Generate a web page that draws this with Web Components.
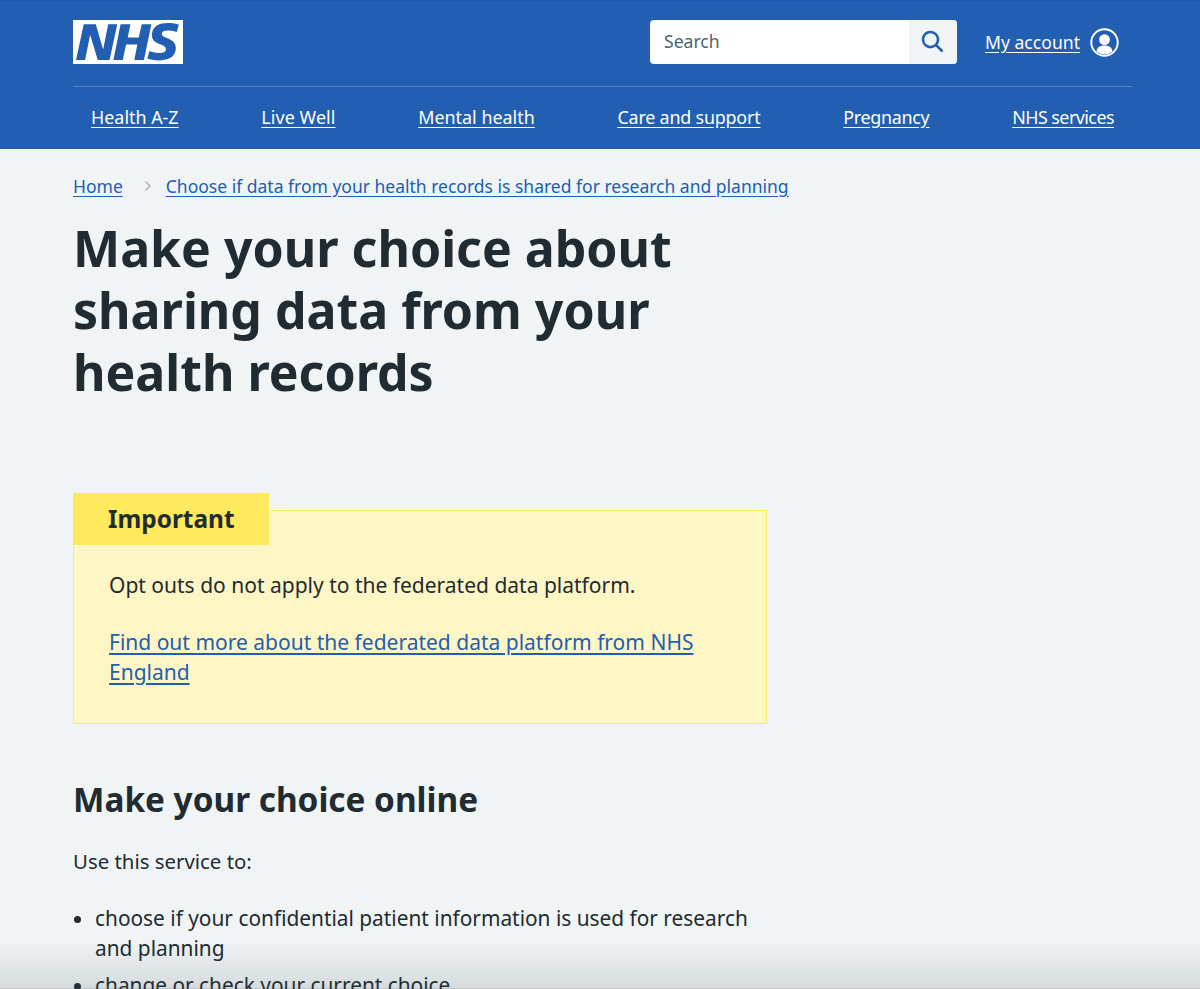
<!DOCTYPE html>
<html lang="en">
<head>
<meta charset="utf-8">
<title>Make your choice about sharing data from your health records</title>
<style>
  html, body { margin: 0; height: 100%; overflow: hidden; }
  body { background: #f0f4f5; color: #212b32; font-family: "Noto Sans", "Open Sans", sans-serif; }
</style>
</head>
<body>
<site-header></site-header>
<main-page>
  <bread-crumbs>
    <a href="#">Home</a>
    <a href="#">Choose if data from your health records is shared for research and planning</a>
  </bread-crumbs>
  <h1 slot="title">Make your choice about sharing data from your health records</h1>
  <important-box label="Important">
    <p>Opt outs do not apply to the federated data platform.</p>
    <p><a href="#">Find out more about the federated data platform from NHS England</a></p>
  </important-box>
  <service-intro></service-intro>
</main-page>
<bottom-fade></bottom-fade>

<script>
class SiteHeader extends HTMLElement {
    constructor() {
        super();
        this.attachShadow({ mode: 'open' });
    }

    connectedCallback() {
        const links = [['Health A-Z', 0], ['Live Well', 0.08], ['Mental health', 0], ['Care and support', -0.2], ['Pregnancy', -0.28], ['NHS services', -0.55]];
        this.shadowRoot.innerHTML = `
            <style>
                :host { display: block; height: 149px; box-sizing: border-box; background: #225eb1; border-top: 1px solid #1f58a6; padding: 0 68px 0 73px; color: #fff; }
                a { color: #fff; text-underline-offset: 3px; }
                .top { display: flex; align-items: center; height: 85px; border-bottom: 1px solid #4f80c4; }
                .logo { display: block; width: 110px; height: 44px; margin-top: -3px; }
                .search { display: flex; width: 307px; height: 44px; margin-left: auto; margin-top: -3px; background: #fff; border-radius: 4px; overflow: hidden; }
                .search span { flex: 1; padding-left: 14px; line-height: 43px; font-size: 17.6px; color: #4c6272; }
                .search div { width: 48px; background: #f0f4f5; display: flex; align-items: center; justify-content: center; }
                .account { display: flex; align-items: center; gap: 10px; margin-left: 28px; margin-right: 13px; font-size: 17.6px; margin-top: -3px; }
                nav { display: flex; justify-content: space-between; padding: 17px 18px 0; font-size: 17.9px; line-height: 26px; }
            </style>
            <div class="top">
                <svg class="logo" viewBox="0 0 40 16" aria-label="NHS">
                    <path fill="#fff" d="M0 0h40v16H0z"/>
                    <path fill="#225eb1" d="M3.9 1.5h4.4l2.6 9h.1l1.8-9h3.3l-2.8 13H9l-2.7-9h-.1l-1.8 9H1.1M17.3 1.5h3.6l-1 4.9h4L25 1.5h3.5l-2.7 13h-3.5l1.1-5.6h-4.1l-1.2 5.6h-3.4M37.7 4.4c-.7-.3-1.6-.6-2.9-.6-1.4 0-2.5.2-2.5 1.3 0 1.8 5.1 1.2 5.1 5.1 0 3.6-3.3 4.500-6.4 4.500-1.300 0-2.900-.3-4-.7l.8-2.700c.7.4 2.100.7 3.200.7s2.800-.2 2.800-1.500c0-2.100-5.100-1.300-5.100-5 0-3.400 2.900-4.400 5.800-4.400 1.600 0 3.100.2 4 .6"/>
                </svg>
                <div class="search">
                    <span>Search</span>
                    <div>
                        <svg width="30" height="30" viewBox="0 0 24 24"><path fill="#225eb1" d="M19.71 18.29l-4.11-4.1a7 7 0 1 0-1.41 1.41l4.1 4.11a1 1 0 0 0 1.42 0 1 1 0 0 0 0-1.42zM5 10a5 5 0 1 1 5 5 5 5 0 0 1-5-5z"/></svg>
                    </div>
                </div>
                <div class="account">
                    <a href="#">My account</a>
                    <svg width="29" height="29" viewBox="0 0 29 29">
                        <circle cx="14.5" cy="14.5" r="13.2" fill="none" stroke="#fff" stroke-width="2"/>
                        <circle cx="14.5" cy="11.6" r="5.4" fill="#fff"/>
                        <path fill="#fff" d="M6.6 23.4c.2-4 3.200-6 7.900-6s7.700 2 7.900 6a12 12 0 0 1-15.800 0z"/>
                    </svg>
                </div>
            </div>
            <nav>${links.map(([l, ls]) => `<a href="#" style="letter-spacing:${ls}px">${l}</a>`).join('')}</nav>
        `;
    }
}

class BreadCrumbs extends HTMLElement {
    constructor() {
        super();
        this.attachShadow({ mode: 'open' });
        this.shadowRoot.innerHTML = `
            <style>
                :host { display: flex; align-items: center; font-size: 17.5px; line-height: 26px; margin-top: -1px; }
                ::slotted(a) { color: #225eb1; text-underline-offset: 3px; }
                svg { margin: 0 13px 0 20px; }
            </style>
            <slot name="first"></slot>
            <svg width="10" height="12" viewBox="0 0 10 12"><path d="M2.500 1.500 7 6l-4.500 4.500" fill="none" stroke="#aeb7bd" stroke-width="1.500"/></svg>
            <slot></slot>
        `;
    }

    connectedCallback() {
        this.firstElementChild.slot = 'first';
    }
}

class ImportantBox extends HTMLElement {
    constructor() {
        super();
        this.attachShadow({ mode: 'open' });
    }

    connectedCallback() {
        this.shadowRoot.innerHTML = `
            <style>
                :host { display: block; position: relative; width: 694px; box-sizing: border-box; margin-top: 107px; background: #fff6c6; border: 1px solid #ffeb6b; padding: 59px 35px 36px; font-size: 21px; line-height: 30px; color: #212b32; }
                .label { position: absolute; left: -1px; top: -18px; height: 52px; width: 196px; box-sizing: border-box; padding-left: 35px; background: #ffe95c; font-weight: 700; font-size: 24.4px; line-height: 51px; }
                ::slotted(p) { margin: 0 0 27px; }
                ::slotted(p:last-child) { margin-bottom: 0; }
            </style>
            <div class="label">${this.getAttribute('label')}</div>
            <slot></slot>
        `;
        this.querySelectorAll('a').forEach(a => { a.style.color = '#225eb1'; a.style.textUnderlineOffset = '3px'; });
    }
}

class ServiceIntro extends HTMLElement {
    constructor() {
        super();
        this.attachShadow({ mode: 'open' });
        this.shadowRoot.innerHTML = `
            <style>
                :host { display: block; width: 694px; font-size: 20.85px; line-height: 30px; }
                h2 { margin: 52px 0 0; font-size: 33.35px; line-height: 46px; font-weight: 700; }
                p { margin: 24px 0 0; font-size: 20.4px; }
                ul { margin: 27px 0 0; padding: 0 15px 0 22px; list-style: none; }
                li { margin-bottom: 7px; }
                li::before { content: ""; display: inline-block; width: 7px; height: 7px; border-radius: 50%; background: #212b32; margin: 0 14px 0 -21px; vertical-align: 3px; }
            </style>
            <h2>Make your choice online</h2>
            <p>Use this service to:</p>
            <ul>
                <li>choose if your confidential patient information is used for research and planning</li>
                <li>change or check your current choice</li>
            </ul>
        `;
    }
}

class MainPage extends HTMLElement {
    constructor() {
        super();
        this.attachShadow({ mode: 'open' });
        this.shadowRoot.innerHTML = `
            <style>
                :host { display: block; padding: 25px 0 0 73px; }
                ::slotted(h1) { margin: 18px 0 0; width: 640px; font-size: 50px; line-height: 62px; font-weight: 700; }
            </style>
            <slot name="crumbs"></slot>
            <slot name="title"></slot>
            <slot></slot>
        `;
    }

    connectedCallback() {
        this.querySelector('bread-crumbs').slot = 'crumbs';
    }
}

class BottomFade extends HTMLElement {
    constructor() {
        super();
        this.attachShadow({ mode: 'open' });
        this.shadowRoot.innerHTML = `
            <style>
                :host { position: fixed; left: 0; right: 0; bottom: 0; height: 48px; pointer-events: none; background: linear-gradient(rgba(60,70,75,0), rgba(60,70,75,.14)); border-bottom: 1px solid rgba(60,70,75,.28); }
            </style>
        `;
    }
}

customElements.define('site-header', SiteHeader);
customElements.define('bread-crumbs', BreadCrumbs);
customElements.define('important-box', ImportantBox);
customElements.define('service-intro', ServiceIntro);
customElements.define('main-page', MainPage);
customElements.define('bottom-fade', BottomFade);
</script>
</body>
</html>
